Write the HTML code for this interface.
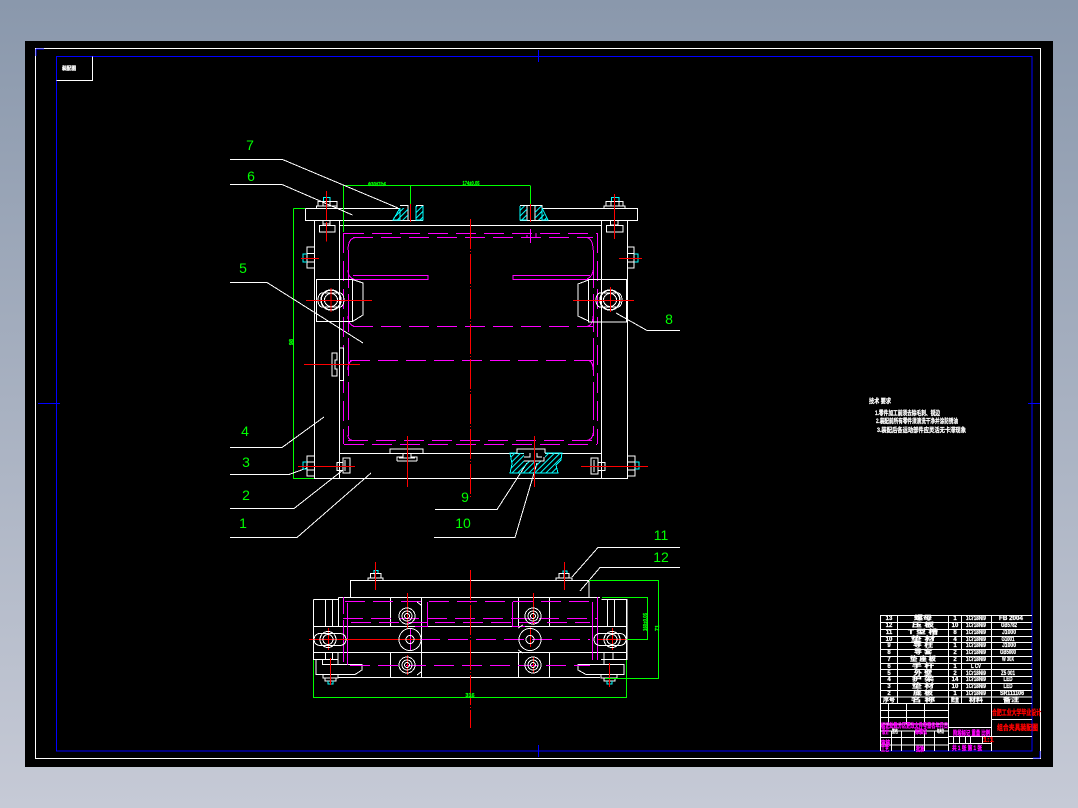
<!DOCTYPE html>
<html><head><meta charset="utf-8"><title>CAD drawing</title>
<style>
html,body{margin:0;padding:0;width:1078px;height:808px;overflow:hidden;background:#a8b1c0}
svg{display:block}
text{font-family:"Liberation Sans","Noto Sans CJK SC",sans-serif}
.w{stroke:#fff;fill:none;stroke-width:1}
.g{stroke:#0f0;fill:none;stroke-width:1}
.r{stroke:#f00;fill:none;stroke-width:1}
.m{stroke:#f0f;fill:none;stroke-width:1}
.c{stroke:#0ff;fill:none;stroke-width:1}
.b{stroke:#00f;fill:none;stroke-width:1.4}
.cl{stroke-dasharray:30 2 1 2}
.md{stroke-dasharray:20 8}
.mi{stroke-dasharray:38 6}
.n{fill:#0f0;font-size:14px;text-anchor:middle}
.t{fill:#fff;stroke:#fff;stroke-width:.25;font-size:6px;font-weight:bold;text-anchor:middle}
.t text{stroke:#fff;stroke-width:.25}
.p{fill:#f0f;stroke:#f0f;stroke-width:.35;font-size:6.5px;font-weight:bold}
.rd{fill:#f00;stroke:#f00;stroke-width:.35;font-size:7.5px;font-weight:bold}
.gt{fill:#0f0;stroke:#0f0;stroke-width:.25;font-size:5.5px;font-weight:bold}
</style></head><body>
<svg width="1078" height="808" viewBox="0 0 1078 808" xmlns="http://www.w3.org/2000/svg" shape-rendering="crispEdges">
<defs>
<linearGradient id="bg" x1="0" y1="0" x2="0" y2="1"><stop offset="0" stop-color="#8a98ac"/><stop offset="1" stop-color="#c6cad6"/></linearGradient>
<pattern id="h" width="4" height="4" patternUnits="userSpaceOnUse" patternTransform="rotate(45)"><rect width="1" height="4" fill="#0ff"/></pattern>
</defs>
<rect width="1078" height="808" fill="url(#bg)"/>
<rect x="25" y="41" width="1028" height="726" fill="#000"/>

<rect x="35.5" y="48.5" width="1005" height="710" class="w"/>
<rect x="56.5" y="56.5" width="975.5" height="694.5" class="b"/>
<path class="b" d="M36 49H44M36 49V56M1040 758H1033M1040 758V751M538.5 50V62M538.5 745V757M38 403.5H60M1028 403.5H1040"/>
<path class="w" d="M92.5 56.5V80.5H56.5"/>
<path class="b" d="M56.5 56.5V80"/>

<!-- top view body -->
<path class="w" d="M305.5 208.5H400M305.5 208.5V220.5H423M314.5 220.5V478.5H627.5V220.5M339.5 220.5V478.5M601.5 220.5V478.5M339.5 225.5H601.5M339.5 453.5H601.5"/>
<path class="w" d="M542 208.5H637.5V220.5H520"/>
<path class="w" d="M400 205.5H408V220M416 205.5H423V220.5M520 205.5H542V220.5M527 205.5V220M535 205.5V220"/>
<path class="g" d="M293.5 208.5H305M293.5 208.5V478.5H314M343.5 185.5V232M343.5 185.5H530M410.5 185.5V205M530.5 185.5V205"/>
<rect x="400" y="208" width="8" height="12" fill="url(#h)"/><rect x="416" y="206" width="7" height="14" fill="url(#h)"/>
<rect x="520" y="206" width="7" height="14" fill="url(#h)"/><rect x="535" y="206" width="7" height="14" fill="url(#h)"/>
<path d="M393 220L400 208V220Z" fill="url(#h)"/><path d="M548 220L540 208V220Z" fill="url(#h)"/>
<path class="c" d="M400 208V220H393L400 208M423 206V220H416V206M520 206V220H527M542 208V220H548L542 208"/>

<!-- leaders -->
<path class="w" d="M230 159.5H282.5L398 208M230 184.5H282L352.5 215M230 282.5H267L363 343M230 447.5H282L324 417M230 474.5H289L307 468M230 508.5H294L343 470M230 537.5H297L371 473M616 313L647 330.5H680M435 509.5H497L527 463M434 537.5H515L537 463M680 547.5H598L572 577M680 567.5H600L580 591"/>

<g class="n">
<text x="250" y="150">7</text><text x="251" y="181">6</text><text x="243" y="273">5</text><text x="245" y="436">4</text><text x="246" y="467">3</text><text x="246" y="500">2</text><text x="243" y="528">1</text><text x="669" y="324">8</text><text x="465" y="502">9</text><text x="463" y="528">10</text><text x="661" y="540">11</text><text x="661" y="562">12</text>
</g>

<!-- magenta details -->
<path class="m md" d="M344 233.5H597M353 237.5H593M353 326.5H593M350 360.5H593M348 440.5H593M344 444.5H597"/>
<path class="m md" d="M343.5 233V444M597.5 233V444"/>
<path class="m mi" d="M348.5 250V436M593.5 250V436"/>
<path class="m" d="M353 275.5H428V279.5H353M590 275.5H513V279.5H590"/>
<path class="m" d="M530.5 229V243M527 235V237.5H536V233"/>
<path class="m" d="M348 250Q348 238 356 237.5M593 250Q593 238 586 237.5M348 270Q348 278 355 279.5M593 270Q593 276 587 279M348 316Q348 325 355 326.5M593 316Q593 325 587 326.5M348 370Q348 361 353 360.5M593 370Q593 361 588 360.5M348 435Q348 440 353 440.5M593 433Q593 439 587 440.5"/>

<!-- bolts on plate -->
<path class="w" d="M316.5 208V206H337V208M318 206V201.5H337V206M323 206V201.5M330 206V201.5M323 220.5V224H330V220.5M319.5 225.5H335V232H319.5ZM323 225V224M330 225V224"/>
<path class="w" d="M604 208V206H625V208M606 206V201.5H623V206M611 206V201.5M619 206V201.5M610.5 220.5V225H618V220.5M606.5 225.5H623V232H606.5Z"/>
<path class="c" d="M323.5 201V197.5H330V201M611.5 201V197.5H619V201"/>
<!-- side bolts -->
<path class="w" d="M314 247H307V268H314M307 253.5H314M307 262H314"/>
<path class="c" d="M307 254H303V262H307M634 254H638V262H634"/>
<path class="w" d="M627.5 247H634V268H627.5M627.5 253.5H634M627.5 262H634"/>
<path class="w" d="M314 456H307V476H314M307 462H314M307 470H314M628 456H635V476H628M628 462H635M628 470H635"/>
<path class="c" d="M307 462H303V469H307M635 462H639V469H635"/>
<path class="w" d="M337 462.5H343V470.5H337ZM343 458H350V473H343ZM345 460V471M598 462.5H605V470.5H598ZM591 458H598V474H591ZM594 460V472"/>
<!-- side latch -->
<path class="w" d="M339.5 348H343.5V380.5H339.5M332 353H337V360H335V369H337V376H332Z"/>
<!-- T slot -->
<path class="w" d="M390 453V449H423V453M397 461V457H403V453M417 461V457H411V453M397 461H417M399 458H415"/>
<!-- blocks -->
<path class="w" d="M316.5 279.5H352.5V321.5H316.5Z"/>
<path class="w" d="M588.5 279.5H626.5V322H588.5Z"/>
<path class="w" d="M352.5 279.5L363 283V315L352.5 321.5M588.5 280L578 284V316L588.5 321M318 300a4 7 0 0 1 4-7h18a4 7 0 0 1 0 14h-18a4 7 0 0 1-4-7M622 300a4 7 0 0 1-4 7h-18a4 7 0 0 1 0-14h18a4 7 0 0 1 4 7"/>
<g class="w"><circle cx="331" cy="300" r="10" stroke-width="1.5"/><circle cx="331" cy="300" r="6.5"/><circle cx="610" cy="300" r="10" stroke-width="1.5"/><circle cx="610" cy="300" r="6.5"/></g>

<!-- section hatch -->
<path d="M510 453H562L561 460L556 465L558 473H510L512 464Z" fill="url(#h)" stroke="#0ff"/>
<path d="M517 449H545V461H524V453H517Z" fill="#000"/>
<path class="w" d="M517 453V449H545V453M524 457H530V453M537 453V457H542M524 461H544V457"/>

<!-- red center lines -->
<path class="r cl" d="M470.5 219V497"/>
<path class="r" d="M326.5 191V220M326.5 222V241.5M614.5 194V239M301 258.5H319M619 258.5H642M306 300.5H372M331 288V312M573 300.5H634M610.5 287V312M304 364.5H360M298 466.5H355M581 466.5H648M407.5 436V487M534.5 436V487M410.5 204V222M530.5 204V222"/>

<!-- lower view -->
<path class="w" d="M350.5 597.5V580.5H589V597.5M338.5 597.5H600M338 677.5H600M338.5 597.5V626M313.5 599.5H338M313.5 599.5V659.5H338V652M325.5 600V626M332.5 600V626M325.5 652V659M332.5 652V659M313.5 626.5H627M313.5 652.5H627M390.5 597.5V626M421.5 597.5V677.5M390.5 652V677.5M518.5 597.5V626M549.5 597.5V626M518.5 652V677.5M549.5 652V677.5M338 659V664M601.5 599.5H627V659.5H601M607.5 600V626M614.5 600V626M626.5 599V660M604 652V664.5M613 652V660"/>
<path class="w" d="M322.5 660V664.5H362V670L355 674.5H316V659M578 664.5H624V674.5H586L578 670Z"/>
<path class="w" d="M368 580V578H383V580M370.5 578V573.5H381V578M375 573.5V578M556 580V578H572V580M559 578V573.5H569V578M564 573.5V578M323 675V678H338V675M325 678V681H336V678M601 675V678H617V675M604 678V681H615V678"/>
<path class="c" d="M374 573V570.5H378V573M563 573V571H567V573M328 681V684H333V681M607 681V684H612V681"/>
<path class="m md" d="M345 601.5H590M343 618.5H597M351 622.5H590M420 639.5H590M350 665.5H590"/>
<path class="m" d="M343.5 597V614M343.5 620V662M347.5 603V665M427.5 602V626.5H415M512.5 602V626.5H525M592.5 602V660M597.5 597V660M410.5 628V650"/>
<path class="r cl" d="M470.5 570V728"/>
<path class="r" d="M375.5 562V590M564.5 562V590M407.5 593V629M407.5 655V675M533.5 593V625M530.5 627V647M533.5 657V673M309 639.5H420M328.5 628V650M612.5 628V650M330.5 658V685M609.5 663V687M598 639.5H634"/>
<path class="g" d="M313.5 660V697.5H626.5V660M589 580.5H658.5V678.5H605M602 597.5H647.5V639.5H627"/>
<g class="w" stroke-width="1.4">
<circle cx="407" cy="616" r="8"/><circle cx="407" cy="616" r="5"/><circle cx="407" cy="616" r="2.5"/>
<circle cx="407" cy="665" r="8"/><circle cx="407" cy="665" r="5"/><circle cx="407" cy="665" r="2.5"/>
<circle cx="533" cy="616" r="8"/><circle cx="533" cy="616" r="5"/><circle cx="533" cy="616" r="2.5"/>
<circle cx="533" cy="665" r="8"/><circle cx="533" cy="665" r="5"/><circle cx="533" cy="665" r="2.5"/>
<circle cx="410" cy="639.5" r="11"/><circle cx="410" cy="639.5" r="4"/>
<circle cx="530" cy="639.5" r="11"/><circle cx="530" cy="639.5" r="4"/>
<circle cx="328" cy="639.5" r="8"/><circle cx="328" cy="639.5" r="5"/><circle cx="612" cy="639.5" r="8"/><circle cx="612" cy="639.5" r="5"/>
</g>
<path class="w" d="M320 633.5H340a6 6 0 0 1 0 12H320a6 6 0 0 1 0-12M620 633.5H600a6 6 0 0 0 0 12H620a6 6 0 0 0 0-12M421 605L417 602M421 672L417 675M518 628L523 625M518 650L523 653"/>

<!-- dim text -->
<text class="gt" x="377" y="186" text-anchor="middle" textLength="18" lengthAdjust="spacingAndGlyphs">Φ30H7/h6</text>
<text class="gt" x="471" y="185" text-anchor="middle" textLength="17" lengthAdjust="spacingAndGlyphs">174±0.05</text>
<text class="gt" transform="translate(293,342) rotate(-90)" text-anchor="middle">98</text>
<text class="gt" x="470" y="697" text-anchor="middle">316</text>
<text class="gt" transform="translate(647,622) rotate(-90)" text-anchor="middle" textLength="18" lengthAdjust="spacingAndGlyphs">160±0.05</text>
<text class="gt" transform="translate(659,628) rotate(-90)" text-anchor="middle">71</text>

<text x="62" y="70" fill="#fff" stroke="#fff" stroke-width=".3" font-size="5" font-weight="bold" textLength="14" lengthAdjust="spacingAndGlyphs">装配图</text>

<!-- notes -->
<g fill="#fff" stroke="#fff" stroke-width=".25" font-size="6.5" font-weight="bold">
<text x="869" y="403" textLength="22" lengthAdjust="spacingAndGlyphs">技术 要求</text>
<text x="875" y="415" textLength="65" lengthAdjust="spacingAndGlyphs">1.零件加工前须去除毛刺、锐边</text>
<text x="876" y="423" textLength="82" lengthAdjust="spacingAndGlyphs">2.装配前所有零件须清洗干净并涂防锈油</text>
<text x="877" y="432" textLength="89" lengthAdjust="spacingAndGlyphs">3.装配后各运动部件应灵活无卡滞现象</text>
</g>

<!-- title block -->
<path class="w" d="M880.5 615.5H1032M880.5 622.5H1032M880.5 629.5H1032M880.5 636.5H1032M880.5 642.5H1032M880.5 649.5H1032M880.5 656.5H1032M880.5 663.5H1032M880.5 669.5H1032M880.5 676.5H1032M880.5 683.5H1032M880.5 690.5H1032M880.5 697H1032M880.5 703.5H1032"/>
<path class="w" d="M880.5 615V751M897.5 615V703M948.5 615V751M961.5 615V703M991.5 615V751"/>
<path class="w" d="M880.5 710.5H948M880.5 717.5H948M880.5 724H948M880.5 731H948M880.5 737.5H948M880.5 745H948M888.5 703V724M906.5 703V724M924.5 703V724M891.5 731V751M901.5 731V751M914.5 731V751M924.5 731V751M934.5 731V751M948.5 727.5H991M948.5 736.5H1032M948.5 743.5H991M953.5 736V743M959.5 736V743M965.5 736V743M970.5 736V743M982.5 736V743M991.5 719.5H1032"/>
<g class="t">
<text x="889" y="620">13</text><text x="923" y="620" textLength="18" lengthAdjust="spacingAndGlyphs">螺母</text><text x="955" y="620">1</text><text x="976" y="620" textLength="20" lengthAdjust="spacingAndGlyphs">1Cr18Ni9</text><text x="1011" y="620" textLength="24" lengthAdjust="spacingAndGlyphs">FB 2004</text>
<text x="889" y="627">12</text><text x="923" y="627" textLength="22" lengthAdjust="spacingAndGlyphs">压  板</text><text x="955" y="627">10</text><text x="976" y="627" textLength="20" lengthAdjust="spacingAndGlyphs">1Cr18Ni9</text><text x="1009" y="627" textLength="16" lengthAdjust="spacingAndGlyphs">GB5782</text>
<text x="889" y="634">11</text><text x="923" y="634" textLength="30" lengthAdjust="spacingAndGlyphs">T 型 槽</text><text x="955" y="634">8</text><text x="976" y="634" textLength="20" lengthAdjust="spacingAndGlyphs">1Cr18Ni9</text><text x="1009" y="634" textLength="14" lengthAdjust="spacingAndGlyphs">J1000</text>
<text x="889" y="641">10</text><text x="923" y="641" textLength="24" lengthAdjust="spacingAndGlyphs">垫  材</text><text x="955" y="641">4</text><text x="976" y="641" textLength="20" lengthAdjust="spacingAndGlyphs">1Cr18Ni9</text><text x="1008" y="641" textLength="13" lengthAdjust="spacingAndGlyphs">G1001</text>
<text x="889" y="647">9</text><text x="923" y="647" textLength="20" lengthAdjust="spacingAndGlyphs">导 柱</text><text x="955" y="647">1</text><text x="976" y="647" textLength="20" lengthAdjust="spacingAndGlyphs">1Cr18Ni9</text><text x="1009" y="647" textLength="14" lengthAdjust="spacingAndGlyphs">J1000</text>
<text x="889" y="654">8</text><text x="923" y="654" textLength="18" lengthAdjust="spacingAndGlyphs">导 套</text><text x="955" y="654">2</text><text x="976" y="654" textLength="20" lengthAdjust="spacingAndGlyphs">1Cr18Ni9</text><text x="1008" y="654" textLength="16" lengthAdjust="spacingAndGlyphs">GB5000</text>
<text x="889" y="661">7</text><text x="923" y="661" textLength="26" lengthAdjust="spacingAndGlyphs">垫 座 板</text><text x="955" y="661">2</text><text x="976" y="661" textLength="20" lengthAdjust="spacingAndGlyphs">1Cr18Ni9</text><text x="1008" y="661" textLength="12" lengthAdjust="spacingAndGlyphs">W 30X</text>
<text x="889" y="668">6</text><text x="923" y="668" textLength="22" lengthAdjust="spacingAndGlyphs">手 杆</text><text x="955" y="668">1</text><text x="976" y="668" textLength="10" lengthAdjust="spacingAndGlyphs">L CV</text>
<text x="889" y="675">5</text><text x="923" y="675" textLength="18" lengthAdjust="spacingAndGlyphs">外 壁</text><text x="955" y="675">2</text><text x="976" y="675" textLength="20" lengthAdjust="spacingAndGlyphs">1Cr18Ni9</text><text x="1008" y="675" textLength="14" lengthAdjust="spacingAndGlyphs">Z5 001</text>
<text x="889" y="681">4</text><text x="923" y="681" textLength="22" lengthAdjust="spacingAndGlyphs">护 架</text><text x="955" y="681">14</text><text x="976" y="681" textLength="20" lengthAdjust="spacingAndGlyphs">1Cr18Ni9</text><text x="1008" y="681" textLength="9" lengthAdjust="spacingAndGlyphs">LED</text>
<text x="889" y="688">3</text><text x="923" y="688" textLength="22" lengthAdjust="spacingAndGlyphs">垫 材</text><text x="955" y="688">10</text><text x="976" y="688" textLength="20" lengthAdjust="spacingAndGlyphs">1Cr18Ni9</text><text x="1008" y="688" textLength="9" lengthAdjust="spacingAndGlyphs">LED</text>
<text x="889" y="695">2</text><text x="923" y="695" textLength="20" lengthAdjust="spacingAndGlyphs">底 板</text><text x="955" y="695">1</text><text x="976" y="695" textLength="20" lengthAdjust="spacingAndGlyphs">1Cr18Ni9</text><text x="1012" y="695" textLength="24" lengthAdjust="spacingAndGlyphs">SR111106</text>
<text x="889" y="702" textLength="12" lengthAdjust="spacingAndGlyphs">序号</text><text x="923" y="702" textLength="24" lengthAdjust="spacingAndGlyphs">名  称</text><text x="955" y="702" textLength="8" lengthAdjust="spacingAndGlyphs">数量</text><text x="976" y="702" textLength="14" lengthAdjust="spacingAndGlyphs">材料</text><text x="1011" y="702" textLength="16" lengthAdjust="spacingAndGlyphs">备注</text>
</g>
<text class="p" x="881" y="727.5" textLength="67" lengthAdjust="spacingAndGlyphs">标记处数分区更改文件号签名年月日</text>
<text class="p" x="882" y="733.5" textLength="7" lengthAdjust="spacingAndGlyphs">设计</text>
<text class="p" x="915" y="733.5" textLength="12" lengthAdjust="spacingAndGlyphs">标准化</text>
<text x="892" y="733" fill="#fff" stroke="#fff" stroke-width=".3" font-size="5" font-weight="bold" textLength="6" lengthAdjust="spacingAndGlyphs">签名</text>
<text x="937" y="733" fill="#fff" stroke="#fff" stroke-width=".3" font-size="5" font-weight="bold" textLength="7" lengthAdjust="spacingAndGlyphs">年月日</text>
<text class="p" x="881" y="745" textLength="9" lengthAdjust="spacingAndGlyphs">审核</text>
<text class="p" x="881" y="751" textLength="8" lengthAdjust="spacingAndGlyphs">工艺</text>
<text class="p" x="916" y="751" textLength="8" lengthAdjust="spacingAndGlyphs">批准</text>
<text class="p" x="953" y="735" textLength="37" lengthAdjust="spacingAndGlyphs">阶段标记 重量 比例</text>
<text class="p" x="952" y="750" textLength="30" lengthAdjust="spacingAndGlyphs">共 1 张 第 1 张</text>
<text class="rd" x="983" y="742" font-size="6">1:1</text>
<text class="rd" x="992" y="715" textLength="49" lengthAdjust="spacingAndGlyphs">合肥工业大学毕业设计</text>
<text class="rd" x="997" y="730" textLength="41" lengthAdjust="spacingAndGlyphs">组合夹具装配图</text>
</svg>
</body></html>
